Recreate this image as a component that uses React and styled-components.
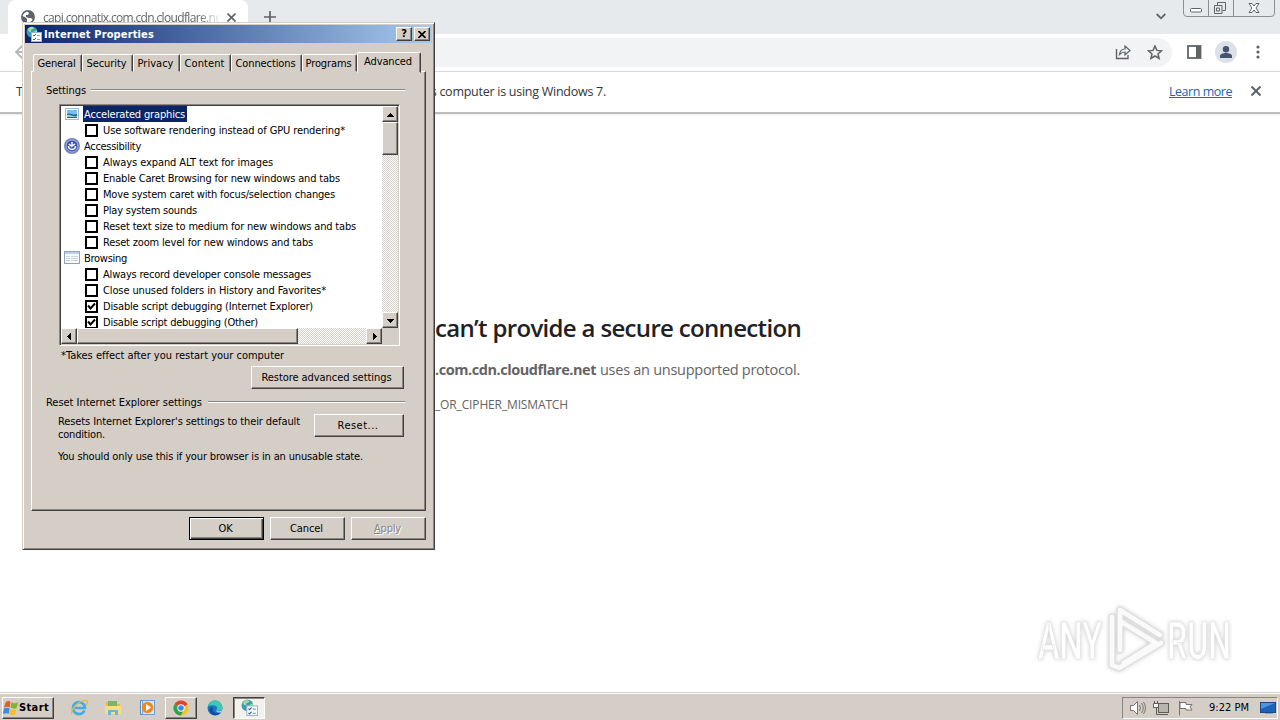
import React from "react";
import styled, { createGlobalStyle, css } from "styled-components";

const FACE = "#d5cec7";
const TAHOMA = `"DejaVu Sans Condensed", "DejaVu Sans", sans-serif`;
const SEGOE = `"Open Sans", "Noto Sans", sans-serif`;

// spreads the letters so the text takes exactly `w` pixels
const Fit = ({ w, children, ...rest }) => {
    const ref = React.useRef(null);
    const [spacing, setSpacing] = React.useState(0);

    React.useLayoutEffect(() => {
        const el = ref.current;
        el.style.letterSpacing = "0px";
        const natural = el.getBoundingClientRect().width;
        const value = (w - natural) / el.textContent.length;
        el.style.letterSpacing = value + "px";
        setSpacing(value);
    }, [w]);

    return <FitText ref={ref} style={{ letterSpacing: spacing }} {...rest}>{children}</FitText>;
};

const rows = [
    { group: true, icon: "graphics", text: "Accelerated graphics", w: 101, selected: true },
    { text: "Use software rendering instead of GPU rendering*", w: 242 },
    { group: true, icon: "access", text: "Accessibility", w: 57 },
    { text: "Always expand ALT text for images", w: 170 },
    { text: "Enable Caret Browsing for new windows and tabs", w: 237 },
    { text: "Move system caret with focus/selection changes", w: 232 },
    { text: "Play system sounds", w: 94 },
    { text: "Reset text size to medium for new windows and tabs", w: 253 },
    { text: "Reset zoom level for new windows and tabs", w: 210 },
    { group: true, icon: "browsing", text: "Browsing", w: 43 },
    { text: "Always record developer console messages", w: 208 },
    { text: "Close unused folders in History and Favorites*", w: 223 },
    { text: "Disable script debugging (Internet Explorer)", w: 210, checked: true },
    { text: "Disable script debugging (Other)", w: 155, checked: true },
];

const tabs = [
    { text: "General", w: 38, width: 49 },
    { text: "Security", w: 40, width: 51 },
    { text: "Privacy", w: 36, width: 47 },
    { text: "Content", w: 40, width: 51 },
    { text: "Connections", w: 60, width: 71 },
    { text: "Programs", w: 46, width: 55 },
];

const RowIcon = ({ name }) => {
    if (name === "graphics") {
        return (
            <svg width="16" height="16">
                <rect x="1.500" y="2.500" width="13" height="11" fill="#fff" stroke="#a9b9c8" />
                <rect x="3" y="4" width="10" height="8" fill="#7fbce8" />
                <path d="M3 8c3-2 5 2 10 0v4H3z" fill="#225f9e" />
                <path d="M3 9c3-1 5 2 10 1v1H3z" fill="#9bd3d8" />
            </svg>
        );
    }
    if (name === "access") {
        return (
            <svg width="16" height="16">
                <circle cx="8" cy="8" r="8" fill="#7785bd" />
                <circle cx="8" cy="8" r="6" fill="#3e55b4" stroke="#a5b2e2" strokeWidth="1" />
                <path d="M8 4v4l3-2M4.500 8c0 4.500 7 4.500 7 0M5 6l2 2" fill="none" stroke="#fff" strokeWidth="1.500" />
            </svg>
        );
    }
    return (
        <svg width="16" height="16">
            <rect x="0.500" y="1.500" width="15" height="12" fill="#f8fafc" stroke="#8fa3b8" />
            <rect x="1" y="2" width="14" height="2" fill="#bed2e6" />
            <path d="M2 6.500h4M2 8.500h4M2 10.500h4M7 6.500h7M7 8.500h7M7 10.500h7" stroke="#c9d5de" />
        </svg>
    );
};

const Arrow = ({ d }) => (
    <ScrollBtn>
        <svg width="7" height="7" shapeRendering="crispEdges"><path d={d} fill="#000" /></svg>
    </ScrollBtn>
);

const GlobeList = ({ size }) => (
    <svg width={size} height={size} viewBox="0 0 16 16">
        <circle cx="6" cy="6" r="5.500" fill="#3f9bb5" />
        <path d="M2 3c2-3 5-2 6-1-1 2-3 1-3 3S2 6 2 3zM7 6l4-2v3z" fill="#9fdc9b" />
        <rect x="5.500" y="6.500" width="10" height="9" fill="#fff" stroke="#9fb4c8" />
        <path d="M7 9l1 1 2-2M7 13l1 1 2-2" fill="none" stroke="#2a62a5" />
        <path d="M11 9.500h3M11 13.500h3" stroke="#8ba0b4" />
    </svg>
);

const Dialog = () => (
    <Window>
        <TitleBar>
            <GlobeList size={16} />
            <Title><Fit w={110}>Internet Properties</Fit></Title>
            <CaptionBtn>?</CaptionBtn>
            <CaptionBtn>
                <svg width="8" height="7"><path d="M0.500 0L7.500 7M7.500 0L0.500 7" stroke="#000" strokeWidth="1.600" /></svg>
            </CaptionBtn>
        </TitleBar>
        <TabRow>
            {tabs.map((t) => (
                <Tab key={t.text} $width={t.width}><Fit w={t.w}>{t.text}</Fit></Tab>
            ))}
            <Tab $active $width={64}><Fit w={48}>Advanced</Fit></Tab>
        </TabRow>
        <Panel>
            <GroupTitle><Fit w={40}>Settings</Fit><Rule $gap={5} /></GroupTitle>
            <ListBox>
                <List>
                    {rows.map((r) => r.group ? (
                        <Row key={r.text}>
                            <RowIcon name={r.icon} />
                            <GroupName $selected={r.selected}><Fit w={r.w}>{r.text}</Fit></GroupName>
                        </Row>
                    ) : (
                        <Row key={r.text} $item>
                            <CheckBox>
                                {r.checked && (
                                    <svg width="9" height="9"><path d="M1 3.500L3.500 6.500L8 1.500" fill="none" stroke="#000" strokeWidth="2" /></svg>
                                )}
                            </CheckBox>
                            <Fit w={r.w}>{r.text}</Fit>
                        </Row>
                    ))}
                </List>
                <VScroll>
                    <Arrow d="M3 2h1v1h1v1h1v1h1v1H0V5h1V4h1V3h1z" />
                    <Thumb $h={33} />
                    <Spacer />
                    <Arrow d="M0 2h7v1H6v1H5v1H4v1H3V5H2V4H1V3H0z" />
                </VScroll>
                <HScroll>
                    <Arrow d="M4 0h1v7H4V6H3V5H2V4H1V3h1V2h1V1h1z" />
                    <Thumb $w={221} />
                    <Spacer />
                    <Arrow d="M2 0h1v1h1v1h1v1h1v1H5v1H4v1H3v1H2z" />
                </HScroll>
            </ListBox>
            <Note><Fit w={223}>*Takes effect after you restart your computer</Fit></Note>
            <RestoreRow>
                <Button $w={153}><Fit w={130}>Restore advanced settings</Fit></Button>
            </RestoreRow>
            <GroupTitle $second><Fit w={156}>Reset Internet Explorer settings</Fit><Rule $gap={6} /></GroupTitle>
            <ResetRow>
                <ResetText>
                    <Fit w={242}>Resets Internet Explorer's settings to their default</Fit>
                    <Fit w={47}>condition.</Fit>
                </ResetText>
                <Button $w={90}><Fit w={41}>Reset...</Fit></Button>
            </ResetRow>
            <Warning><Fit w={305}>You should only use this if your browser is in an unusable state.</Fit></Warning>
        </Panel>
        <Footer>
            <Button $w={75} $default><Fit w={14}>OK</Fit></Button>
            <Button $w={75}><Fit w={33}>Cancel</Fit></Button>
            <Button $w={75} $disabled><Fit w={27}><u>A</u>pply</Fit></Button>
        </Footer>
    </Window>
);

const Browser = () => (
    <BrowserWrap>
        <TabStrip>
            <BrowserTab>
                <svg width="14" height="14" viewBox="0 0 14 14">
                    <circle cx="7" cy="7" r="6.200" fill="#fff" stroke="#5f6368" strokeWidth="1.500" />
                    <path d="M1 6l3 1 2 2v4C2 13 0 9 1 6zM6 1l2 2-1 2H5v2l3 1h2l2 2c2-3 1-8-4-9z" fill="#5f6368" />
                </svg>
                <TabTitle><Fit w={182}>capi.connatix.com.cdn.cloudflare.net</Fit></TabTitle>
                <svg width="9" height="9"><path d="M0.500 0.500l8 8M8.500 0.500l-8 8" stroke="#5f6368" strokeWidth="1.600" /></svg>
            </BrowserTab>
            <NewTab>
                <svg width="12" height="12"><path d="M6 0v12M0 6h12" stroke="#5f6368" strokeWidth="1.700" /></svg>
            </NewTab>
            <TabSearch>
                <svg width="10" height="7"><path d="M0.700 1L5 5.300L9.300 1" fill="none" stroke="#5f6368" strokeWidth="1.800" /></svg>
            </TabSearch>
            <WinControls>
                <svg width="92" height="17" fill="none" stroke="#777b80">
                    <path d="M0.500 0v13q0 3.500 3.500 3.500h84q3.500 0 3.500-3.500V0M25.500 0v16M50.500 0v16" stroke="#8b8e92" />
                    <rect x="7.500" y="8.500" width="11" height="3.500" rx="1" fill="#fff" stroke="#606468" />
                    <path d="M34.500 5V2.500h8v8h-3" stroke="#606468" />
                    <path d="M31.500 5.500h7.500v8h-7.500zM33.500 8h3v3h-3z" stroke="#606468" />
                    <path d="M66 3.500h3l2 2.500 2-2.500h3l-3 4.500 3 4.500h-3l-2-2.500-2 2.500h-3l3-4.500z" fill="#fff" stroke="#606468" />
                </svg>
            </WinControls>
        </TabStrip>
        <Toolbar>
            <svg width="16" height="16"><path d="M8 2L2 8l6 6M2 8h13" fill="none" stroke="#b5b7ba" strokeWidth="1.800" /></svg>
            <Omnibox>
                <svg width="17" height="16" fill="none" stroke="#5f6368">
                    <path d="M1.500 4v9.500H13V10" strokeWidth="1.400" />
                    <path d="M4.500 9.500C5 6 7 4 10 4V1l5 4.500-5 4.500V7C7.500 7 6 8 4.500 9.500z" strokeWidth="1.200" />
                </svg>
                <svg width="16" height="16"><path d="M8 1l1.900 4.400 4.700.4-3.600 3.100 1.100 4.600L8 11 3.900 13.500 5 8.900 1.400 5.800l4.700-.4z" fill="none" stroke="#5f6368" strokeWidth="1.500" /></svg>
            </Omnibox>
            <svg width="15" height="14"><rect x="1" y="1" width="12.500" height="12" fill="#fff" stroke="#5f6368" strokeWidth="1.800" /><rect x="9" y="1" width="5" height="12" fill="#5f6368" /></svg>
            <Avatar>
                <svg width="14" height="14"><circle cx="7" cy="4.200" r="3.200" fill="#46536e" /><path d="M1 13v-2c0-4 12-4 12 0v2z" fill="#46536e" /></svg>
            </Avatar>
            <svg width="4" height="14" fill="#5f6368"><circle cx="2" cy="2" r="1.600" /><circle cx="2" cy="7" r="1.600" /><circle cx="2" cy="12" r="1.600" /></svg>
        </Toolbar>
        <InfoBar>
            <Fit w={590}>To get future Google Chrome updates, you'll need Windows 10 or later. This computer is using Windows 7.</Fit>
            <Spacer />
            <Link><Fit w={63}>Learn more</Fit></Link>
            <svg width="10" height="10"><path d="M0.500 0.500l9 9M9.500 0.500l-9 9" stroke="#5f6368" strokeWidth="2" /></svg>
        </InfoBar>
        <Page>
            <ErrorBox>
                <Heading><Fit w={366}>can’t provide a secure connection</Fit></Heading>
                <Reason><b><Fit w={161}>.com.cdn.cloudflare.net</Fit></b><Fit w={200}>uses an unsupported protocol.</Fit></Reason>
                <Code><Fit w={133}>_OR_CIPHER_MISMATCH</Fit></Code>
            </ErrorBox>
            <Logo />
        </Page>
    </BrowserWrap>
);

const Logo = () => (
    <LogoBox>
        <svg width="212" height="76" viewBox="0 0 212 76">
            <g fill="#fff" fontFamily="Roboto, sans-serif" fontWeight="500" fontSize="51" stroke="#e3e3e3" strokeWidth="0.700">
                <text x="9" y="56" textLength="64" lengthAdjust="spacingAndGlyphs">ANY</text>
                <text x="138" y="56" textLength="64" lengthAdjust="spacingAndGlyphs">RUN</text>
            </g>
            <g fill="none" strokeLinejoin="round" strokeLinecap="round">
                <path d="M83 14v48M91 7v40M83 62l7 3 42-25M91 7l40 25M91 47V18l36 22-32 20" stroke="#e0e0e0" strokeWidth="7" />
                <path d="M83 14v48M91 7v40M83 62l7 3 42-25M91 7l40 25M91 47V18l36 22-32 20" stroke="#fafafa" strokeWidth="4.500" />
            </g>
        </svg>
    </LogoBox>
);

const TaskBar = () => (
    <Bar>
        <StartBtn>
            <svg width="16" height="16" viewBox="0 0 17 17">
                <path d="M3 2c2-1.500 4-1 5 0L7 8C5 6.500 3 7 1 8z" fill="#e75c25" />
                <path d="M9 2.500c2 1.500 4 1 7 0l-1.500 6c-2 1-4 1-6.500-.5z" fill="#80b52e" />
                <path d="M1 9c2-1 4-1 6 0l-1 6c-2-1.500-4-1-6 0z" fill="#398fdb" />
                <path d="M8 9.500c2 1.500 4 1 6 .5l-1 5.500c-2 1.500-4 1-6-.5z" fill="#f6be29" />
            </svg>
            <Fit w={30}>Start</Fit>
        </StartBtn>
        <Quick>
            <svg width="18" height="18" viewBox="0 0 18 18">
                <path d="M14.500 11.500A6 6 0 1 1 15 9H5" fill="none" stroke="#43aee5" strokeWidth="2.700" />
                <path d="M2 15C-1 11 12-1 17 2c1 1 0 3-1 4" fill="none" stroke="#e6b845" strokeWidth="1.300" />
            </svg>
        </Quick>
        <Quick>
            <svg width="18" height="18" viewBox="0 0 18 18">
                <path d="M2 3h5l1 2h8v10H2z" fill="#e5b94f" />
                <rect x="4" y="2" width="9" height="5" fill="#77b66c" />
                <path d="M1 7h16v8H1z" fill="#f9dd83" />
                <path d="M4 16v-5h10v5h-3v-3H7v3z" fill="#69b5dc" />
            </svg>
        </Quick>
        <Quick>
            <svg width="17" height="17">
                <rect x="1.500" y="1.500" width="12" height="14" fill="#eef5fc" stroke="#4f8acb" />
                <rect x="3.500" y="1.500" width="12" height="14" fill="#d5e7f8" stroke="#6aa0d6" />
                <circle cx="8.500" cy="8.500" r="5.800" fill="#f08a20" />
                <path d="M7 5l5 3.500L7 12z" fill="#fff" />
            </svg>
        </Quick>
        <TaskBtn>
            <svg width="16" height="16" viewBox="0 0 16 16">
                <circle cx="8" cy="8" r="7.500" fill="#f6c51b" />
                <path d="M8 8L1.500 4.250A7.500 7.500 0 0 1 14.500 4.250z" fill="#df4430" />
                <path d="M8 8L1.500 4.250A7.500 7.500 0 0 0 8 15.500L11 9z" fill="#2fa04e" />
                <path d="M8 4.300h6.500L8 8z" fill="#df4430" />
                <circle cx="8" cy="8" r="3.700" fill="#fff" />
                <circle cx="8" cy="8" r="2.800" fill="#4285e8" />
            </svg>
        </TaskBtn>
        <Quick $w={36}>
            <svg width="16" height="16" viewBox="0 0 16 16">
                <circle cx="8" cy="8" r="7.500" fill="#1677c8" />
                <path d="M1 6c1-7 14-8 14.500 2 0 3-4 3.500-6 2 2-3-1-6-8.500-4z" fill="#42c7b4" />
                <path d="M6 8c-2 4 3 6 7.500 5-4 4-10 2-11-2-.7-3 1.500-5 3.500-3z" fill="#104e98" />
                <path d="M9.500 10c1 2 4 1.500 6 0l-1 2c-3 1-6 0-5-2z" fill="#d5cec7" />
            </svg>
        </Quick>
        <TaskBtn $pressed><GlobeList size={17} /></TaskBtn>
        <Spacer />
        <Tray>
            <svg width="17" height="16" fill="none" stroke="#77736e">
                <path d="M1.500 5.500h3l4-4v13l-4-4h-3z" fill="#fff" />
                <path d="M10.500 5q2 3 0 6M12.500 3q3.500 5 0 10M14.500 2q4 6 0 12" />
            </svg>
            <svg width="17" height="16" fill="none" stroke="#5f5c58">
                <rect x="5.500" y="3.500" width="10" height="9" fill="#b8b4ae" />
                <path d="M7 14.500h8M3.500 8v6.500H8" />
                <path d="M1.500 1v3M4.500 1v3M0.500 3.500h5v4h-5z" fill="#fff" />
            </svg>
            <svg width="17" height="16" fill="#fff" stroke="#77736e"><path d="M2.500 1v14.500M3 2.500h6v2h6l-2 2.500 2 3H9V8.500H3z" /></svg>
            <Clock><Fit w={40}>9:22 PM</Fit></Clock>
            <svg width="16" height="14">
                <rect x="0.500" y="1.500" width="15" height="10" fill="#1e62b8" stroke="#174a8c" />
                <path d="M1 2h14L1 8z" fill="#4c94dc" />
                <rect x="5" y="12" width="8" height="1" fill="#8ea3bd" />
            </svg>
        </Tray>
    </Bar>
);

const App = () => (
    <Desktop>
        <GlobalStyle />
        <Browser />
        <TaskBar />
        <Dialog />
    </Desktop>
);

const GlobalStyle = createGlobalStyle`
  * { box-sizing: border-box; }
  body { margin: 0; overflow: hidden; }
  svg { display: block; flex: none; }
`;

const raised = css`
  border: 1px solid;
  border-color: #fff #404040 #404040 #fff;
  box-shadow: inset -1px -1px 0 #8a8580;
`;

const Desktop = styled.div`
  position: relative;
  width: 1280px;
  height: 720px;
  display: flex;
  flex-direction: column;
  overflow: hidden;
  background: #fff;
  font-family: ${TAHOMA};
  font-size: 11px;
  color: #000;
`;

const FitText = styled.span`
  display: inline-block;
  white-space: pre;
`;

const Spacer = styled.div`
  flex: 1;
`;

const BrowserWrap = styled.div`
  flex: 1;
  min-height: 0;
  display: flex;
  flex-direction: column;
  font-family: ${SEGOE};
`;

const TabStrip = styled.div`
  height: 34px;
  display: flex;
  align-items: flex-start;
  padding: 0 5px 0 8px;
  background: #e7eaed;
`;

const BrowserTab = styled.div`
  width: 240px;
  height: 34px;
  display: flex;
  align-items: center;
  padding: 0 11px 0 13px;
  border-radius: 8px 8px 0 0;
  background: #fff;
  gap: 8px;
`;

const TabTitle = styled.div`
  width: 176px;
  overflow: hidden;
  font-size: 12px;
  color: #5f6368;
  mask-image: linear-gradient(to right, #000 155px, transparent 178px);
`;

const NewTab = styled.div`
  padding: 11px 16px;
`;

const TabSearch = styled.div`
  margin-left: auto;
  padding: 13px 17px 0 0;
`;

const WinControls = styled.div`
  height: 17px;
`;

const Toolbar = styled.div`
  height: 38px;
  display: flex;
  align-items: center;
  padding: 0 20px 2px 14px;
  border-bottom: 1px solid #d6d8db;
  background: #fff;
`;

const Omnibox = styled.div`
  flex: 1;
  height: 29px;
  display: flex;
  justify-content: flex-end;
  align-items: center;
  gap: 15px;
  margin: 2px 15px 0 90px;
  padding-right: 9px;
  border-radius: 15px;
  background: #f1f3f4;
`;

const Avatar = styled.div`
  width: 22px;
  height: 22px;
  display: flex;
  align-items: center;
  justify-content: center;
  margin: 0 19px 0 13px;
  border-radius: 50%;
  background: #dce1e8;
`;

const InfoBar = styled.div`
  height: 42px;
  display: flex;
  align-items: center;
  padding: 0 19px 2px 16px;
  border-bottom: 2px solid #bcbcbc;
  box-shadow: 0 1px 1px #eee;
  font-size: 12.500px;
  color: #333538;
`;

const Link = styled.div`
  margin-right: 19px;
  color: #2065b5;

  & span {
    text-decoration: underline;
  }
`;

const Page = styled.div`
  position: relative;
  flex: 1;
`;

const ErrorBox = styled.div`
  padding: 196px 0 0 435px;
  color: #646464;
`;

const Heading = styled.div`
  height: 36px;
  line-height: 36px;
  font-size: 24px;
  font-weight: 600;
  color: #202124;
`;

const Reason = styled.div`
  display: flex;
  gap: 4px;
  height: 20px;
  margin-top: 14px;
  line-height: 20px;
  font-size: 14.500px;
`;

const Code = styled.div`
  margin-top: 17px;
  line-height: 16px;
  font-size: 12px;
`;

// watermark floats over the page corner
const LogoBox = styled.div`
  position: absolute;
  right: 39px;
  bottom: 13px;
  filter: drop-shadow(0 0 2px #ccc);
`;

const Window = styled.div`
  position: absolute;
  left: 22px;
  top: 22px;
  width: 413px;
  height: 528px;
  padding: 2px;
  border: 1px solid;
  border-color: ${FACE} #404040 #404040 ${FACE};
  box-shadow: inset 1px 1px 0 #fff, inset -1px -1px 0 #8a8580;
  background: ${FACE};
`;

const TitleBar = styled.div`
  height: 18px;
  display: flex;
  align-items: center;
  gap: 2px;
  padding: 0 2px 0 1px;
  background: linear-gradient(to right, #0a246a, #a6caf0);
`;

const Title = styled.div`
  flex: 1;
  color: #fff;
  font-weight: bold;
  line-height: 19px;
`;

const CaptionBtn = styled.div`
  ${raised}
  width: 16px;
  height: 14px;
  display: flex;
  align-items: center;
  justify-content: center;
  background: ${FACE};
  font-weight: bold;
  line-height: 12px;
`;

const TabRow = styled.div`
  height: 29px;
  display: flex;
  align-items: flex-end;
  padding-left: 8px;
`;

const Tab = styled.div`
  position: relative;
  width: ${(p) => p.$width}px;
  height: ${(p) => (p.$active ? 21 : 18)}px;
  margin-bottom: ${(p) => (p.$active ? -1 : 0)}px;
  padding: 0 2px ${(p) => (p.$active ? 2 : 0)}px 0;
  z-index: ${(p) => (p.$active ? 1 : 0)};
  display: flex;
  align-items: center;
  justify-content: center;
  border: 1px solid;
  border-color: #fff #404040 transparent #fff;
  border-radius: 2px 2px 0 0;
  box-shadow: inset -1px 0 0 #8a8580;
  background: ${FACE};
`;

const Panel = styled.div`
  ${raised}
  width: 395px;
  height: 440px;
  margin: -1px 0 0 6px;
  padding: 10px 20px 0 14px;
`;

const GroupTitle = styled.div`
  height: 16px;
  display: flex;
  align-items: center;
  margin-top: ${(p) => (p.$second ? 5 : 0)}px;
`;

const Rule = styled.div`
  flex: 1;
  height: 2px;
  margin-left: ${(p) => p.$gap}px;
  border-top: 1px solid #8a8580;
  border-bottom: 1px solid #fff;
`;

const ListBox = styled.div`
  display: grid;
  grid-template-columns: 321px 16px;
  grid-template-rows: 222px 16px;
  width: 341px;
  margin: 6px 0 0 13px;
  border: 1px solid;
  border-color: #8a8580 #fff #fff #8a8580;
  padding: 1px;
  box-shadow: inset 1px 1px 0 #404040;
`;

const List = styled.div`
  overflow: hidden;
  background: #fff;
`;

const Row = styled.div`
  height: 16px;
  display: flex;
  align-items: center;
  gap: ${(p) => (p.$item ? 5 : 3)}px;
  padding-left: ${(p) => (p.$item ? 24 : 3)}px;
`;

const GroupName = styled.div`
  height: 16px;
  line-height: 17px;
  padding: 0 2px 0 1px;
  ${(p) => p.$selected && css`
    background: #0a246a;
    color: #fff;
  `}
`;

const CheckBox = styled.div`
  width: 13px;
  height: 13px;
  margin-top: 1px;
  border: 2px solid #000;
  background: #fff;
`;

const track = css`
  display: flex;
  background: conic-gradient(#fff 25%, ${FACE} 0 50%, #fff 0 75%, ${FACE} 0) 0 0 / 2px 2px;
`;

const VScroll = styled.div`
  ${track}
  flex-direction: column;
`;

const HScroll = styled.div`
  ${track}
`;

const ScrollBtn = styled.div`
  ${raised}
  flex: none;
  width: 16px;
  height: 16px;
  display: flex;
  align-items: center;
  justify-content: center;
  background: ${FACE};
`;

const Thumb = styled.div`
  ${raised}
  width: ${(p) => p.$w || 16}px;
  height: ${(p) => p.$h || 16}px;
  background: ${FACE};
`;

const Note = styled.div`
  height: 17px;
  padding-left: 15px;
  line-height: 20px;
`;

const RestoreRow = styled.div`
  display: flex;
  justify-content: flex-end;
  margin: 3px 1px 0 0;
`;

const Button = styled.div`
  ${raised}
  flex: none;
  width: ${(p) => p.$w}px;
  height: 23px;
  display: flex;
  align-items: center;
  justify-content: center;
  padding-right: 2px;
  background: ${FACE};
  ${(p) => p.$default && css`
    border-color: #000;
    box-shadow: inset 1px 1px 0 #fff, inset -1px -1px 0 #404040, inset -2px -2px 0 #8a8580;
  `}
  ${(p) => p.$disabled && css`
    color: #8a8580;
    text-shadow: 1px 1px 0 #fff;
  `}
`;

const ResetRow = styled.div`
  display: flex;
  justify-content: space-between;
  margin: 4px 1px 0 12px;
`;

const ResetText = styled.div`
  display: flex;
  flex-direction: column;
  align-items: flex-start;
  height: 27px;
  padding-top: 1px;
  line-height: 13px;
`;

const Warning = styled.div`
  margin: 8px 0 0 12px;
  line-height: 16px;
`;

const Footer = styled.div`
  display: flex;
  justify-content: flex-end;
  gap: 6px;
  margin: 6px 6px 0 0;
`;

const Bar = styled.div`
  height: 28px;
  display: flex;
  align-items: center;
  padding: 2px 2px 0;
  border-top: 1px solid #d5d0ca;
  box-shadow: inset 0 1px 0 #fff;
  background: ${FACE};
`;

const StartBtn = styled.div`
  ${raised}
  width: 52px;
  height: 22px;
  display: flex;
  align-items: center;
  margin-right: 8px;
  font-weight: bold;
`;

const Quick = styled.div`
  width: ${(p) => p.$w || 34}px;
  height: 22px;
  display: flex;
  align-items: center;
  justify-content: center;
`;

const TaskBtn = styled.div`
  ${raised}
  width: 32px;
  height: 22px;
  display: flex;
  align-items: center;
  justify-content: center;
  margin-left: ${(p) => (p.$pressed ? 0 : 1)}px;
  ${(p) => p.$pressed && css`
    border-color: #404040 #fff #fff #404040;
    box-shadow: inset 1px 1px 0 #8a8580;
    background: #f3f1ee;
  `}
`;

const Tray = styled.div`
  height: 22px;
  display: flex;
  align-items: center;
  gap: 7px;
  padding: 0 1px 0 6px;
  border: 1px solid;
  border-color: #8a8580 #fff #fff #8a8580;
`;

const Clock = styled.div`
  margin: 0 4px 0 8px;
`;

export default App;
